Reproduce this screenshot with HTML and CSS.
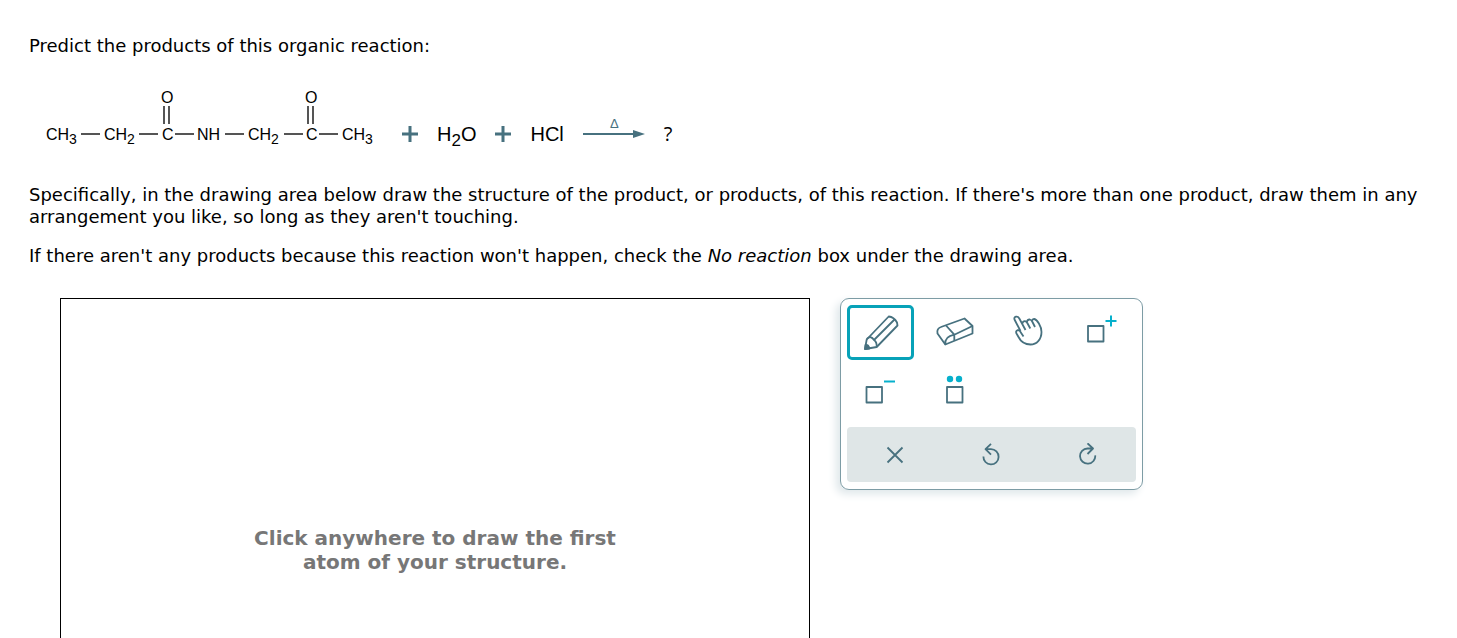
FILE: index.html
```html
<!DOCTYPE html>
<html lang="en">
<head>
    <meta charset="utf-8" />
    <title>Organic reaction products</title>
    <link rel="stylesheet" href="styles.css">
</head>
<body>
    <div class="question">
        <p>Predict the products of this organic reaction:</p>
        <div class="reaction">
            <svg class="molecule" width="330" height="60" viewBox="45 88 330 60">
                <g class="atoms">
                    <text x="46" y="140">CH<tspan class="sub" dy="4">3</tspan></text>
                    <text x="104" y="140">CH<tspan class="sub" dy="4">2</tspan></text>
                    <text x="162" y="140">C</text>
                    <text x="161" y="103">O</text>
                    <text x="197" y="140">NH</text>
                    <text x="248" y="140">CH<tspan class="sub" dy="4">2</tspan></text>
                    <text x="306" y="140">C</text>
                    <text x="305" y="103">O</text>
                    <text x="342" y="140">CH<tspan class="sub" dy="4">3</tspan></text>
                </g>
                <path class="bonds" d="M81 134H100M139 134H158M175 134H194M225 134H244M284 134H303M319 134H338M164 106V124M169 106V124M308 106V124M313 106V124" />
            </svg>
            <svg class="plus" width="16" height="28" viewBox="0 0 16 28"><path d="M0 14H16M8 6V22" /></svg>
            <span class="formula">H<sub>2</sub>O</span>
            <svg class="plus" width="16" height="28" viewBox="0 0 16 28"><path d="M0 14H16M8 6V22" /></svg>
            <span class="formula">HCl</span>
            <svg class="arrow" width="62" height="34" viewBox="0 0 62 34">
                <text x="27" y="14">Δ</text>
                <path class="shaft" d="M0 20H52" />
                <path class="head" d="M50 16L62 20L50 24Z" />
            </svg>
            <span class="unknown">?</span>
        </div>
        <p>Specifically, in the drawing area below draw the structure of the product, or products, of this reaction. If there's more than one product, draw them in any arrangement you like, so long as they aren't touching.</p>
        <p>If there aren't any products because this reaction won't happen, check the <i>No reaction</i> box under the drawing area.</p>
    </div>
    <div class="editor">
        <div class="canvas">
            <div class="hint">Click anywhere to draw the first atom of your structure.</div>
        </div>
        <div class="toolbox">
            <div class="tools">
                <button type="button" class="tool selected" aria-label="Draw">
                    <svg width="61" height="49" viewBox="3 3 61 49">
                        <path d="M18 44L19.700 34.500L41.700 11.500Q47 12 50 17.500L50.500 20.500L29.700 42Z" />
                        <path d="M19.700 34Q24 30 27 35Q30 37 29.700 42M27 35L47.500 14.500" />
                        <path class="solid" d="M18 44L18.500 40Q21.500 39.500 22.500 43.500Z" />
                    </svg>
                </button>
                <button type="button" class="tool" aria-label="Erase">
                    <svg width="61" height="49" viewBox="3 3 61 49">
                        <path d="M16.500 28.500Q15.500 23.500 20 22L43.500 13.500L51.500 21V28.500L24.300 39.500Z" />
                        <path d="M25 20.500L33.300 29.700L51.500 21M24.300 39.500Q23.500 31.500 33.300 29.700V35.700" />
                    </svg>
                </button>
                <button type="button" class="tool" aria-label="Move">
                    <svg width="61" height="49" viewBox="3 3 61 49">
                        <path d="M25.500 26L19.500 14.500Q18.800 12.300 21 11.700Q23 11.300 24.300 13.500L30.500 25M27.300 18.500Q28 16 30 16.200Q31.500 16.500 32.300 18L35.300 23.500M31.800 17Q32.500 14.300 34.800 14.500Q36.500 15 37.200 16.500L40 22M36.800 16Q37.500 13.800 39.300 14C42 14.500 46.500 21 46.500 27C46.500 34.500 41.500 39.500 35.500 39.500C29 39.500 25.500 36 23.500 32L21.500 28.500Q20.300 26 22.800 25.200Q24.800 25.200 25.500 27L28.500 31.500" />
                    </svg>
                </button>
                <button type="button" class="tool" aria-label="Add positive charge">
                    <svg width="61" height="49" viewBox="3 3 61 49">
                        <path d="M19 21H34.500V36.500H19Z" />
                        <path class="mark" d="M36.500 16H47.500M42 10.500V21.500" />
                    </svg>
                </button>
                <button type="button" class="tool" aria-label="Add negative charge">
                    <svg width="61" height="49" viewBox="3 3 61 49">
                        <path d="M19.500 21H35V36.500H19.500Z" />
                        <path class="mark" d="M37 15.500H48" />
                    </svg>
                </button>
                <button type="button" class="tool" aria-label="Add lone pair">
                    <svg width="61" height="49" viewBox="3 3 61 49">
                        <path d="M26 21H41.500V36.500H26Z" />
                        <circle class="dot" cx="29" cy="13" r="3.200" />
                        <circle class="dot" cx="38" cy="13" r="3.200" />
                    </svg>
                </button>
            </div>
            <div class="actions">
                <button type="button" aria-label="Clear">
                    <svg width="24" height="24" viewBox="0 0 24 24"><path d="M4.500 4.500L19.500 19.500M19.500 4.500L4.500 19.500" /></svg>
                </button>
                <button type="button" aria-label="Undo">
                    <svg width="24" height="24" viewBox="0 0 24 24"><path d="M4.400 13.500A7.600 7.600 0 1 0 12 6.200H6.500M12 0.800L6.500 6.200L12 11.700" /></svg>
                </button>
                <button type="button" aria-label="Redo">
                    <svg width="24" height="24" viewBox="0 0 24 24"><path d="M19.200 12.300A7.600 7.600 0 1 1 11.500 5.500H17M11.500 0.300L17 5.500L11.500 11" /></svg>
                </button>
            </div>
        </div>
    </div>
</body>
</html>
```
FILE: styles.css
```css
* {
    box-sizing: border-box;
}
body {
    margin: 0;
    padding: 35px 29px 0;
    background: #fff;
    color: #000;
    font-family: Verdana, "DejaVu Sans", sans-serif;
    font-size: 18px;
    line-height: 22px;
}
p {
    margin: 0 0 17px;
}

/* reaction scheme */
.reaction {
    display: flex;
    align-items: flex-end;
    gap: 19px;
    margin: 31px 0 36px;
    padding-left: 16px;
    font-family: Arial, "Liberation Sans", sans-serif;
    font-size: 20px;
    line-height: 28px;
}
.reaction svg {
    flex: none;
}
.molecule {
    margin-right: 8px;
}
.atoms {
    font-size: 16px;
}
.atoms .sub {
    font-size: 14px;
}
.bonds {
    stroke: #555;
    stroke-width: 2;
}
.bonds, .plus path {
    fill: none;
}
.formula sub {
    font-size: 17px;
    line-height: 0;
}
.plus path {
    stroke: #47717f;
    stroke-width: 3;
}
.arrow text {
    fill: #47717f;
    font-size: 13px;
}
.arrow .shaft {
    stroke: #47717f;
    stroke-width: 2;
}
.arrow .head {
    fill: #47717f;
}
.unknown {
    font-family: "Open Sans", sans-serif;
}

/* drawing area */
.editor {
    display: flex;
    align-items: flex-start;
    gap: 30px;
    margin-top: 31px;
    padding-left: 31px;
}
.canvas {
    display: flex;
    flex: 0 1 750px;
    align-items: center;
    justify-content: center;
    height: 504px;
    border: 1px solid #000;
}
.hint {
    max-width: 400px;
    color: #777;
    font-size: 20px;
    font-weight: bold;
    line-height: 24px;
    text-align: center;
}
.toolbox {
    flex: none;
    padding: 6px 6px 7px;
    border: 1px solid #7d9ca5;
    border-radius: 9px;
    box-shadow: -4px 4px 8px #dfe7ea;
}
.tools {
    display: grid;
    grid-template-columns: repeat(4, 67px);
    grid-auto-rows: 55px;
    gap: 6px 7px;
}
button {
    padding: 0;
    border: 0;
    background: none;
    cursor: pointer;
}
button svg {
    display: block;
    margin: auto;
    fill: none;
    stroke: #47717f;
    stroke-width: 1.8;
    stroke-linejoin: round;
}
.tool {
    border: 3px solid transparent;
    border-radius: 5px;
}
.tool.selected {
    border-color: #07a2b8;
}
.tool .solid {
    fill: #47717f;
}
.tool .mark {
    stroke: #06b0cc;
    stroke-width: 2;
}
.tool .dot {
    fill: #06b0cc;
    stroke: none;
}
.actions {
    display: grid;
    grid-template-columns: repeat(3, 1fr);
    height: 55px;
    margin-top: 6px;
    border-radius: 4px;
    background: #dfe6e7;
}
```
